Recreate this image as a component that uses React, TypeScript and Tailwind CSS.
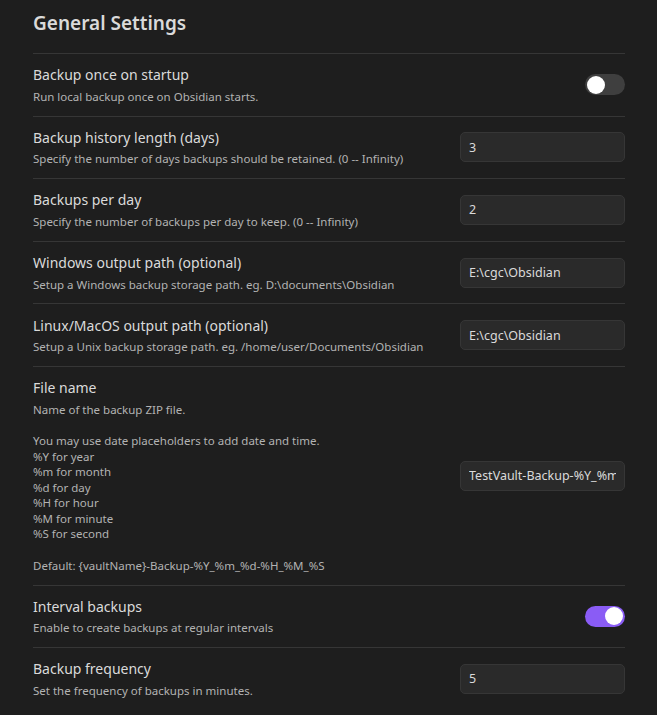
import React, { useState } from "react";

type Row =
  | { kind: "toggle"; name: string; desc: string[]; on: boolean }
  | { kind: "text"; name: string; desc: string[]; value: string };

const ROWS: Row[] = [
  { kind: "toggle", name: "Backup once on startup", desc: ["Run local backup once on Obsidian starts."], on: false },
  { kind: "text", name: "Backup history length (days)", desc: ["Specify the number of days backups should be retained. (0 -- Infinity)"], value: "3" },
  { kind: "text", name: "Backups per day", desc: ["Specify the number of backups per day to keep. (0 -- Infinity)"], value: "2" },
  { kind: "text", name: "Windows output path (optional)", desc: ["Setup a Windows backup storage path. eg. D:\\documents\\Obsidian"], value: "E:\\cgc\\Obsidian" },
  { kind: "text", name: "Linux/MacOS output path (optional)", desc: ["Setup a Unix backup storage path. eg. /home/user/Documents/Obsidian"], value: "E:\\cgc\\Obsidian" },
  {
    kind: "text",
    name: "File name",
    desc: [
      "Name of the backup ZIP file.",
      "",
      "You may use date placeholders to add date and time.",
      "%Y for year",
      "%m for month",
      "%d for day",
      "%H for hour",
      "%M for minute",
      "%S for second",
      "",
      "Default: {vaultName}-Backup-%Y_%m_%d-%H_%M_%S",
    ],
    value: "TestVault-Backup-%Y_%m_%d-%H_%M_%S",
  },
  { kind: "toggle", name: "Interval backups", desc: ["Enable to create backups at regular intervals"], on: true },
  { kind: "text", name: "Backup frequency", desc: ["Set the frequency of backups in minutes."], value: "5" },
];

function Toggle({ initial }: { initial: boolean }) {
  const [on, setOn] = useState(initial);
  return (
    <button
      onClick={() => setOn(!on)}
      className={`relative w-[40px] h-[21px] rounded-full shrink-0 transition-colors ${on ? "bg-[#8a5cf5]" : "bg-[#3f3f3f]"}`}
    >
      <span
        className={`absolute top-[1.5px] w-[18px] h-[18px] rounded-full bg-white transition-all ${on ? "left-[20px]" : "left-[2px]"}`}
      />
    </button>
  );
}

export default function App() {
  return (
    <div
      className="min-h-[715px] bg-[#1e1e1e] pl-[33px] pr-[32px] pt-[9px] text-[#dadada]"
      style={{ fontFamily: '"Noto Sans", "Open Sans", sans-serif' }}
    >
      <h2 className="text-[19px] font-semibold leading-[28px] pb-[16px]">General Settings</h2>

      {ROWS.map((row) => (
        <div key={row.name} className="flex items-center gap-6 border-t border-[#363636] py-[11.25px]">
          <div className="flex-1 min-w-0">
            <div className="text-[14px] leading-[19.5px]">{row.name}</div>
            <div className="pt-[4px] text-[11.5px] leading-[15.6px] text-[#b3b3b3]">
              {row.desc.map((line, i) => (
                <div key={i} className="h-[15.6px] whitespace-nowrap">{line}</div>
              ))}
            </div>
          </div>
          {row.kind === "toggle" ? (
            <Toggle initial={row.on} />
          ) : (
            <input
              defaultValue={row.value}
              className="w-[165px] h-[30px] shrink-0 rounded-[5px] border border-[#363636] bg-[#2a2a2a] px-[8px] text-[12.5px] text-[#dadada] outline-none"
            />
          )}
        </div>
      ))}
    </div>
  );
}
